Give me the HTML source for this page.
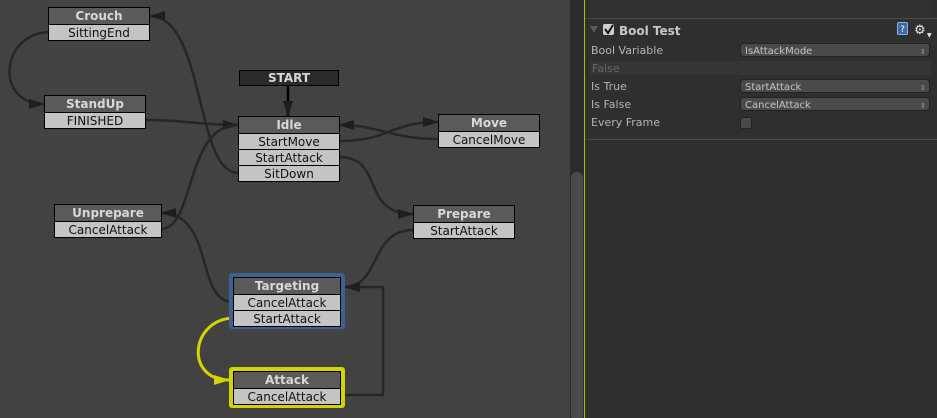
<!DOCTYPE html>
<html><head><meta charset="utf-8"><style>
html,body{margin:0;padding:0;width:937px;height:418px;overflow:hidden;background:#424242;font-family:"DejaVu Sans","Liberation Sans",sans-serif}
</style></head><body>
<svg width="937" height="418" viewBox="0 0 937 418" xmlns="http://www.w3.org/2000/svg" style="position:absolute;left:0;top:0" font-family="DejaVu Sans, Liberation Sans, sans-serif">
<defs>
<marker id="a" markerWidth="16" markerHeight="10" refX="15" refY="5" orient="auto" markerUnits="userSpaceOnUse"><path d="M0,0 L16,5 L0,10 Z" fill="#1e1e1e"/></marker>
<marker id="y" markerWidth="16" markerHeight="10" refX="15" refY="5" orient="auto" markerUnits="userSpaceOnUse"><path d="M0,0 L16,5 L0,10 Z" fill="#d4d400"/></marker>
</defs>
<rect x="0" y="0" width="570" height="418" fill="#424242"/>
<g fill="none" stroke="#262626" stroke-width="2.5">
<path d="M238,173 C195,173 205,16 150,16" marker-end="url(#a)"/>
<path d="M48,32 C0,35 -5,104 44,104" marker-end="url(#a)"/>
<path d="M145,120 C185,120 200,125 238,125" marker-end="url(#a)"/>
<path d="M161,229 C195,229 185,125 238,125"/>
<path d="M233,302 C195,302 215,213 161,213" marker-end="url(#a)"/>
<path d="M339,141 C390,141 390,122 438,122" marker-end="url(#a)"/>
<path d="M438,139 C390,139 380,125 339,125" marker-end="url(#a)"/>
<path d="M339,157 C385,157 360,214 413,214" marker-end="url(#a)"/>
<path d="M413,230 C370,230 380,287 345,287" marker-end="url(#a)"/>
<path d="M341,395 L383,395 L383,287 L345,287" marker-end="url(#a)"/>
<path d="M288,85 L288,116" stroke="#000" marker-end="url(#a)"/>
</g>
<path d="M233,318 C190,320 185,380 229,380" fill="none" stroke="#d4d400" stroke-width="3" marker-end="url(#y)"/>
<g stroke="#000" stroke-width="1">
<rect x="48.5" y="7.5" width="101" height="17" fill="#5a5a5a"/><rect x="48.5" y="24.5" width="101" height="16" fill="#c4c4c4"/>
<rect x="44.5" y="95.5" width="101" height="17" fill="#5a5a5a"/><rect x="44.5" y="112.5" width="101" height="16" fill="#c4c4c4"/>
<rect x="239.5" y="70.5" width="99" height="15" fill="#2a2a2a"/>
<rect x="238.5" y="116.5" width="101" height="17" fill="#5a5a5a"/><rect x="238.5" y="133.5" width="101" height="16" fill="#c4c4c4"/><rect x="238.5" y="149.5" width="101" height="16" fill="#c4c4c4"/><rect x="238.5" y="165.5" width="101" height="16" fill="#c4c4c4"/>
<rect x="438.5" y="114.5" width="101" height="17" fill="#5a5a5a"/><rect x="438.5" y="131.5" width="101" height="16" fill="#c4c4c4"/>
<rect x="413.5" y="205.5" width="101" height="17" fill="#5a5a5a"/><rect x="413.5" y="222.5" width="101" height="16" fill="#c4c4c4"/>
<rect x="54.5" y="204.5" width="107" height="17" fill="#5a5a5a"/><rect x="54.5" y="221.5" width="107" height="16" fill="#c4c4c4"/>
</g>
<rect x="229" y="273" width="116" height="56" rx="3" fill="#3d6195"/>
<rect x="229" y="367" width="116" height="41" rx="3" fill="#d4d400"/>
<g stroke="#000" stroke-width="1">
<rect x="233.5" y="277.5" width="107" height="17" fill="#5a5a5a"/><rect x="233.5" y="294.5" width="107" height="16" fill="#c4c4c4"/><rect x="233.5" y="310.5" width="107" height="16" fill="#c4c4c4"/>
<rect x="233.5" y="371.5" width="107" height="17" fill="#5a5a5a"/><rect x="233.5" y="388.5" width="107" height="16" fill="#c4c4c4"/>
</g>
<g font-size="12" text-anchor="middle">
<g font-weight="bold" fill="#d8d8d8">
<text x="99" y="20">Crouch</text><text x="95" y="108">StandUp</text><text x="289" y="82">START</text>
<text x="289" y="129">Idle</text><text x="489" y="127">Move</text><text x="464" y="218">Prepare</text>
<text x="108" y="217">Unprepare</text><text x="287" y="290">Targeting</text><text x="287" y="384">Attack</text>
</g>
<g fill="#111">
<text x="99" y="37">SittingEnd</text><text x="95" y="125">FINISHED</text>
<text x="289" y="146">StartMove</text><text x="289" y="162">StartAttack</text><text x="289" y="178">SitDown</text>
<text x="489" y="144">CancelMove</text><text x="464" y="235">StartAttack</text><text x="108" y="234">CancelAttack</text>
<text x="287" y="307">CancelAttack</text><text x="287" y="323">StartAttack</text><text x="287" y="401">CancelAttack</text>
</g></g>
<rect x="570" y="0" width="14" height="418" fill="#2c2c2c"/>
<rect x="571" y="172" width="12" height="250" rx="6" fill="#4b4b4b"/>
<rect x="584" y="0" width="1" height="418" fill="#b8b800"/>
<rect x="585" y="0" width="352" height="418" fill="#2f2f2f"/>
<rect x="590" y="0" width="341" height="17" fill="#313131"/>
<rect x="585" y="18" width="352" height="1" fill="#4a4a4a"/>
<rect x="585" y="139" width="352" height="1" fill="#4a4a4a"/>
<path d="M590,26 L598,26 L594,33 Z" fill="#5a5a5a"/>
<rect x="603" y="24" width="11" height="11" rx="2" fill="#d0d0d0"/>
<path d="M605,29 L608,33 L613,25" fill="none" stroke="#111" stroke-width="2"/>
<text x="619" y="35" font-size="12" font-weight="bold" fill="#c8c8c8">Bool Test</text>
<rect x="897.5" y="22.5" width="10" height="12" rx="1" fill="#3c6aa8" stroke="#8ab0e0"/>
<text x="902.5" y="32" font-size="9" fill="#fff" text-anchor="middle">?</text>
<text x="914" y="34" font-size="13" fill="#e8e8e8">⚙</text>
<text x="927" y="37" font-size="6" fill="#e8e8e8">▼</text>
<g font-size="11" fill="#b4b4b4">
<text x="591" y="54">Bool Variable</text>
<rect x="590" y="61" width="341" height="14" fill="#353535"/>
<text x="592" y="72" fill="#6a6a6a">False</text>
<text x="591" y="90">Is True</text><text x="591" y="108">Is False</text><text x="591" y="126">Every Frame</text>
</g>
<g fill="#4a4a4a" stroke="#222">
<rect x="740.5" y="43.5" width="189" height="13" rx="3"/><rect x="740.5" y="79.5" width="189" height="13" rx="3"/><rect x="740.5" y="97.5" width="189" height="13" rx="3"/>
<rect x="740.5" y="117.5" width="11" height="11" rx="2"/>
</g>
<g font-size="10" fill="#c4c4c4">
<text x="745" y="54">IsAttackMode</text><text x="745" y="90">StartAttack</text><text x="745" y="108">CancelAttack</text>
<text x="920" y="54" font-size="7" fill="#999">⇕</text><text x="920" y="90" font-size="7" fill="#999">⇕</text><text x="920" y="108" font-size="7" fill="#999">⇕</text>
</g>
</svg>
</body></html>
